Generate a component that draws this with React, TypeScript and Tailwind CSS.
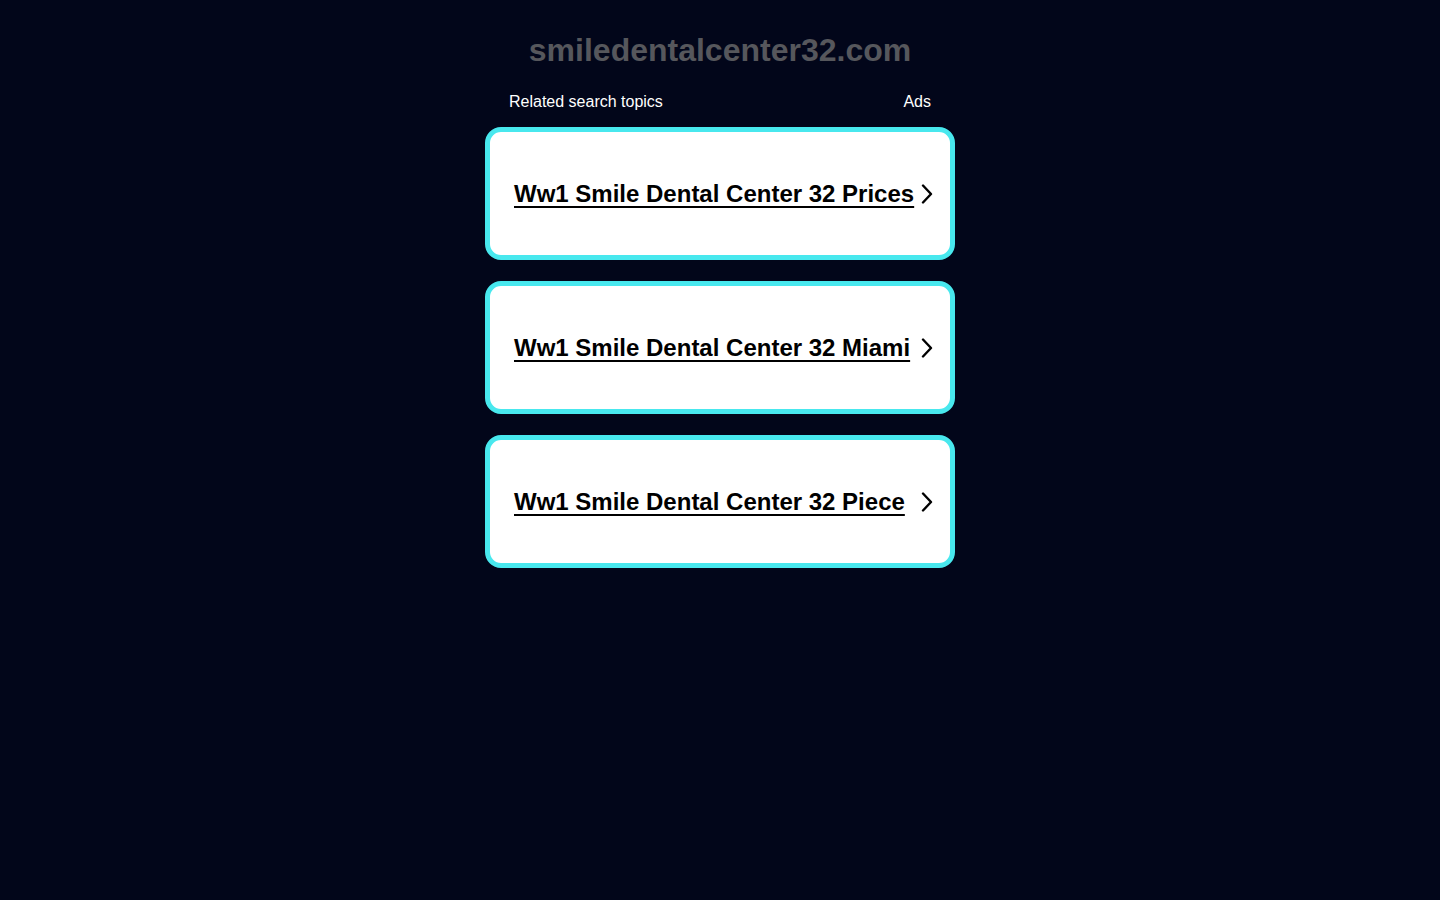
const topics = [
  'Ww1 Smile Dental Center 32 Prices',
  'Ww1 Smile Dental Center 32 Miami',
  'Ww1 Smile Dental Center 32 Piece',
]

function Chevron() {
  return (
    <svg width="12" height="20" viewBox="0 0 12 20" fill="none" className="shrink-0">
      <path d="M2 1.5 L10 10 L2 18.5" stroke="#000" strokeWidth="2.4" strokeLinecap="round" strokeLinejoin="round" />
    </svg>
  )
}

export default function App() {
  return (
    <div
      className="min-h-screen bg-[#02061a] flex flex-col items-center"
      style={{ fontFamily: '"Liberation Sans", Arial, sans-serif' }}
    >
      <h1 className="mt-[30px] text-[32px] leading-[40px] font-bold text-[#56575c]">smiledentalcenter32.com</h1>

      <div className="mt-[22px] w-[470px] px-6 flex justify-between text-white text-base leading-[20px]">
        <span>Related search topics</span>
        <span>Ads</span>
      </div>

      <div className="mt-[15px] w-[470px] flex flex-col gap-[21px]">
        {topics.map((t) => (
          <a
            key={t}
            href="#"
            className="h-[133px] bg-white border-[5px] border-[#48e8ee] rounded-[16px] flex items-center justify-between pl-6 pr-[17px]"
          >
            <span className="whitespace-nowrap text-[24px] leading-[30px] font-bold text-black underline underline-offset-[4px] decoration-2">{t}</span>
            <Chevron />
          </a>
        ))}
      </div>
    </div>
  )
}
